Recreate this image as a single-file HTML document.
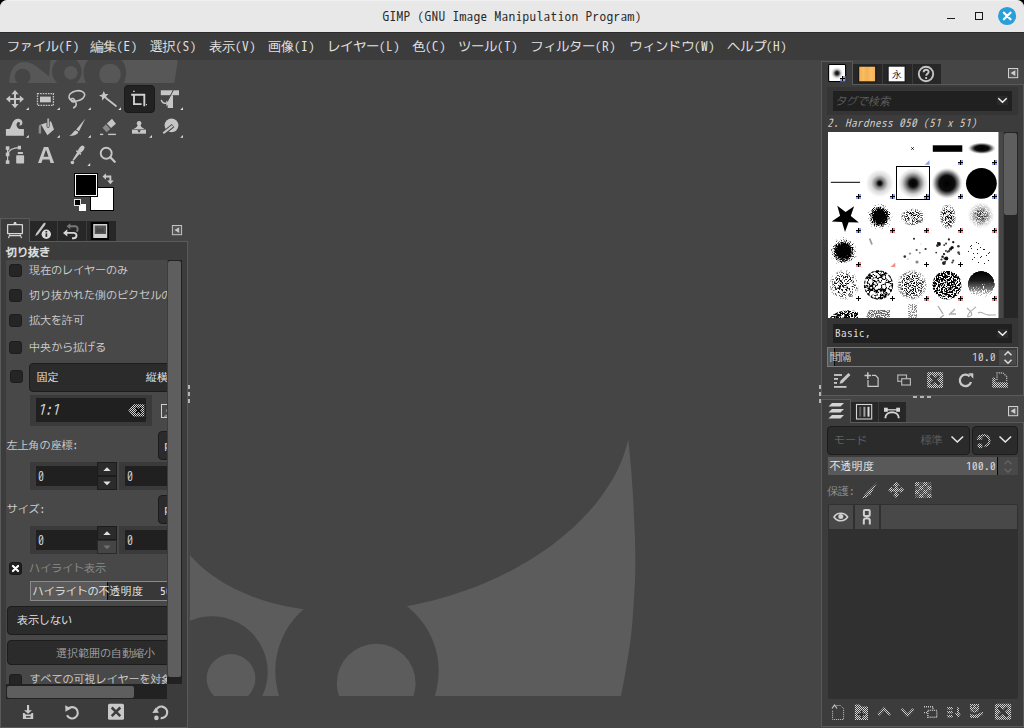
<!DOCTYPE html>
<html lang="ja">
<head>
<meta charset="utf-8">
<title>GIMP (GNU Image Manipulation Program)</title>
<style>
*{box-sizing:border-box;margin:0;padding:0}
html,body{width:1024px;height:728px;overflow:hidden;background:#454545}
body{position:relative;font-family:"WenQuanYi Zen Hei Mono","Noto Sans Mono CJK JP","WenQuanYi Zen Hei","Liberation Mono",monospace;font-size:11.11px;color:#cdcdcd;line-height:1}
#root,#root *{position:absolute}
#root{left:0;top:0;width:1024px;height:728px;overflow:hidden}
.t{white-space:nowrap;line-height:16px;height:16px;letter-spacing:-0.11px}
.t b,.m b,.tt b{font-weight:normal;letter-spacing:0.44px;position:static!important}
.m{font-size:13.33px;letter-spacing:-0.33px;color:#e4e4e4;top:38px;line-height:18px;height:18px;white-space:nowrap}
.m b{letter-spacing:0.33px}
svg{overflow:visible}
#title{left:0;top:0;width:1024px;height:32px;background:#e8e8e8;border-radius:7px 7px 0 0;border-top:1px solid #f0f0f0}
#title .tt{left:0;width:1024px;top:6.500px;text-align:center;font-size:13.33px;letter-spacing:0.33px;line-height:18px;color:#2a2a2a;white-space:nowrap}
#corner{left:0;top:0;width:1024px;height:10px;background:#000}
#menubar{left:0;top:32px;width:1024px;height:28px;background:#3c3c3c;border-top:1px solid #2c2c2c}
.cb{width:13px;height:13px;background:#252525;border:1px solid #1d1d1d;border-radius:3px}
.combo{background:#2b2b2b;border:1px solid #1c1c1c;border-radius:4px}
.dot{background:#b4b4b4}
.ic{fill:#c8c8c8}
</style>
</head>
<body>
<div id="root">
<div id="corner"></div>
<div id="title"><div class="tt">GIMP (GNU Image Manipulation Program)</div>
<div style="left:947px;top:16.700px;width:8.2px;height:1.8px;background:#1c1c1c"></div>
<div style="left:975px;top:11px;width:8px;height:8px;border:1.1px solid #151515"></div>
<svg style="left:998px;top:6px" width="18" height="18" viewBox="0 0 18 18"><circle cx="9.1" cy="9" r="9.1" fill="#2b9fda"/><path d="M5.900 5.800L12.500 12.300M12.500 5.800L5.900 12.300" stroke="#fff" stroke-width="2.300" stroke-linecap="round"/></svg>
</div>
<div id="menubar"></div>
<div class="m" style="left:6.6px">ファイル<b>(F)</b></div>
<div class="m" style="left:90.4px">編集<b>(E)</b></div>
<div class="m" style="left:149.6px">選択<b>(S)</b></div>
<div class="m" style="left:209px">表示<b>(V)</b></div>
<div class="m" style="left:268px">画像<b>(I)</b></div>
<div class="m" style="left:327px">レイヤー<b>(L)</b></div>
<div class="m" style="left:412px">色<b>(C)</b></div>
<div class="m" style="left:458px">ツール<b>(T)</b></div>
<div class="m" style="left:530px">フィルター<b>(R)</b></div>
<div class="m" style="left:629px">ウィンドウ<b>(W)</b></div>
<div class="m" style="left:727px">ヘルプ<b>(H)</b></div>
<!-- toolbox -->
<svg id="wilber-small" style="left:0;top:60px;overflow:hidden" width="190" height="23" viewBox="0 60 190 23">
<path d="M9.3 83 C9.3 70 15 62 24 62 C34 62 40 70 49 76.2 L50.5 60 L177.8 60 L174.4 83 Z" fill="#575757"/>
<circle cx="22.6" cy="76.6" r="7.9" fill="#454545"/>
<circle cx="66.8" cy="71.6" r="14.8" fill="#454545"/>
<circle cx="70.9" cy="72.7" r="6.8" fill="#575757"/>
<circle cx="104.8" cy="73" r="21.3" fill="#454545"/>
<circle cx="110" cy="74.4" r="10.7" fill="#575757"/>
<rect x="0" y="83" width="190" height="3" fill="#454545"/>
<rect x="0" y="57" width="190" height="3" fill="#3c3c3c"/>
</svg>
<div style="left:124px;top:85px;width:31px;height:28px;background:#222;border:1px solid #1a1a1a;border-radius:4px"></div>
<svg id="tools" style="left:0;top:0" width="190" height="245" viewBox="0 0 190 245" fill="#c6c6c6" stroke="none">
<g id="tri" fill="#dedede">
<path d="M28.8 107.2V110H26z"/><path d="M59.8 107.2V110H57z"/><path d="M90.8 107.2V110H88z"/><path d="M121 107.2V110H118.2z"/><path d="M183 107.2V110H180.2z"/>
<path d="M28.8 135V137.8H26z"/><path d="M59.8 135V137.8H57z"/><path d="M90.8 135V137.8H88z"/><path d="M152 135V137.8H149.2z"/><path d="M183 135V137.8H180.2z"/>
<path d="M90.2 163V165.9H87.4z"/>
</g>
<!-- move -->
<path d="M15 90l3.6 4.3h-2.6v3.8h3.8v-2.6l4.2 3.6-4.2 3.6v-2.6h-3.8v3.8h2.6l-3.6 4.3-3.6-4.3h2.6v-3.8h-3.8v2.6l-4.2-3.6 4.2-3.6v2.6h3.8v-3.8h-2.6z"/>
<!-- rect select -->
<rect x="37.5" y="93.6" width="15.9" height="11.8" fill="none" stroke="#c6c6c6" stroke-width="1.3" stroke-dasharray="1.6 1"/>
<rect x="40" y="96.6" width="10.8" height="5.7"/>
<!-- lasso -->
<g fill="none" stroke="#c6c6c6" stroke-width="1.6" stroke-linecap="round">
<ellipse cx="76.8" cy="95.8" rx="8" ry="5" transform="rotate(-12 76.8 95.8)"/>
<path d="M70.5 99.5c2-2 4.5-.5 4 1.500c-.5 1.500-3 1.200-3.200-.5M74.500 100.500c2.500 2.500 2.500 5.500-.8 7.300"/>
</g>
<!-- wand -->
<path d="M103.800 91l1.300 3.100 3.400-.2-2.400 2.400 1.500 3.100-3.100-1.400-2.500 2.400 0-3.400-3-1.600 3.300-.9z"/>
<path d="M106.500 98.500L116 106" stroke="#c6c6c6" stroke-width="1.700" stroke-linecap="round"/>
<!-- crop -->
<g fill="none" stroke="#d0d0d0" stroke-width="1.900">
<path d="M131.200 94.700H144.300V106.200"/><path d="M134 94.700V104.100H141.600"/>
</g>
<rect x="133.100" y="90.700" width="1.600" height="1.300" fill="#d0d0d0"/><rect x="146" y="104" width="1" height="1.200" fill="#d0d0d0"/>
<!-- transform -->
<path d="M160.800 90.300H179V95.200H160.800z"/>
<path d="M173 95.200V107.900H167.700V101L170.500 95.200z"/>
<path d="M173.500 89.800L167.300 101.600" stroke="#454545" stroke-width="1" fill="none"/>
<path d="M161.300 99.800c.4 2.700 2.400 3.600 5.400 3.600" fill="none" stroke="#c6c6c6" stroke-width="1.400"/><path d="M166.300 100.500l3.300 2.900-3.300 2.900z"/>
<!-- warp -->
<path d="M5.900 135.700V129.100H9.500C12 127 12 119 17.500 118.800C21 118.700 23 121 22.300 123.800C21.800 125.500 20 126 19.300 125C21 123.500 19.500 121.300 17.800 122.300C15.500 123.800 16.500 128 19.500 129.100H23.900V135.700z"/>
<!-- bucket -->
<path d="M41 124.600L51 121.300 54 129.600 47.400 135.300z"/>
<path d="M38.700 133.600V127.500C38.700 125.500 39.500 124.800 41 124.600L41.200 133.600z" fill="#8a8a8a"/>
<rect x="47" y="118" width="2.300" height="9.600" rx="1.100" stroke="#454545" stroke-width="0.800"/>
<!-- paintbrush -->
<path d="M85.400 118.500L79 131.200 76.200 129.500z"/>
<path d="M75.600 130.300L78.400 132C77.400 135 73 136.300 69.200 135.700C72.300 134.600 73.300 131.300 75.600 130.300z"/>
<!-- eraser -->
<path d="M112 118.800L115.900 123.700 111 128.100 106.800 123.500z"/>
<path d="M106 124.300L110.200 128.900 106.600 132.300 102.500 127.800z" fill="#8a8a8a"/>
<rect x="100" y="133.700" width="3.200" height="1.400"/><rect x="108.100" y="133.700" width="7.800" height="1.400"/>
<!-- clone -->
<circle cx="139.100" cy="123.300" r="2.300"/>
<path d="M137.800 124.500H140.400C140.400 127 143 127.800 144.500 129H133.700C135.200 127.800 137.800 127 137.800 124.500z"/>
<path d="M132 129.600H146V133.700H132z"/>
<path d="M137.300 130.300H140.900L139.100 132.800z" fill="#3a3a3a"/>
<!-- dodge -->
<circle cx="171.500" cy="125.300" r="6.900"/>
<path d="M165.500 131.600L173 125.600" stroke="#454545" stroke-width="4" fill="none"/><path d="M163.300 133.300L172.600 125.900" stroke="#c6c6c6" stroke-width="2.100" fill="none"/>
<!-- paths -->
<g stroke="#c6c6c6" fill="none" stroke-width="1.200"><path d="M7.600 148V162"/><path d="M7.600 154.300C9 150 14 147.600 19.400 147.600"/></g>
<rect x="5.800" y="146.300" width="3.600" height="3.600"/><rect x="5.800" y="152.600" width="3.600" height="3.600"/><rect x="5.800" y="160.300" width="3.600" height="3.600"/><rect x="17.800" y="145.800" width="3.200" height="3.600"/>
<rect x="17.800" y="152" width="5.100" height="2"/><rect x="16.200" y="155.200" width="7.900" height="8.300" rx="0.800"/>
<!-- text A -->
<path d="M43.900 147H48.200L54.100 162.900H50.600L49.400 159.400H42.600L41.400 162.900H38zM43.500 156.800H48.500L46 149.600z"/>
<!-- picker -->
<ellipse cx="81.300" cy="149.200" rx="2.300" ry="4.100" transform="rotate(37 81.300 149.200)"/>
<path d="M76.400 150.600L80.900 154.300" stroke="#c6c6c6" stroke-width="1.500" fill="none"/>
<path d="M77.500 151.700L79.800 153.500L73.700 160.800L72.500 159.900z"/>
<circle cx="72.400" cy="162.500" r="1.800"/>
<!-- zoom -->
<circle cx="106.200" cy="153.300" r="5.500" fill="none" stroke="#c6c6c6" stroke-width="1.900"/>
<path d="M110.300 157.300L114.700 161.700" stroke="#c6c6c6" stroke-width="2.300" stroke-linecap="round"/>
</svg>
<!-- fg/bg -->
<div style="left:90px;top:187px;width:24px;height:24px;background:#fff;border:1px solid #000"></div>
<div style="left:74px;top:173px;width:24px;height:24px;background:#000;border:1px solid #000;box-shadow:inset 0 0 0 1px #fff"></div>
<div style="left:79px;top:204px;width:7px;height:7px;background:#fff"></div>
<div style="left:74px;top:199px;width:7px;height:7px;background:#000;border:1px solid #e6e6e6"></div>
<svg style="left:102px;top:173px" width="13" height="13" viewBox="102 173 13 13" fill="#c8c8c8"><path d="M102.500 176.500l3.500-3.200v2.300h5.300v5h2.400l-3.300 3.700-3.300-3.700h2.300v-3.100h-3.400v2.300z"/></svg>
<!-- tool options dock -->
<div style="left:0;top:241px;width:188px;height:487px;background:#3c3c3c;border:1px solid #5a5a5a"></div>
<div style="left:30px;top:221px;width:85.500px;height:20px;background:#272727"></div>
<div style="left:57px;top:221px;width:1px;height:20px;background:#3c3c3c"></div>
<div style="left:85.500px;top:221px;width:1px;height:20px;background:#3c3c3c"></div>
<div style="left:0px;top:218px;width:30px;height:24px;background:#3c3c3c;border:1px solid #5a5a5a;border-bottom:none"></div>
<svg style="left:0;top:214px" width="190" height="32" viewBox="0 214 190 32" fill="#d6d6d6">
<!-- easel -->
<rect x="7.600" y="224.700" width="14.800" height="9" rx="0.400" fill="none" stroke="#d6d6d6" stroke-width="1.300"/>
<path d="M13.300 224.100l.800-2h1.800l.800 2z"/>
<path d="M9.500 235.600H20.500M9.800 234.300L8.500 238.200M20.200 234.300L21.500 238.200" stroke="#d6d6d6" stroke-width="1.100" fill="none"/>
<!-- device status -->
<path d="M45.300 222.800C45.800 223.200 45.600 224.200 45 225.300L38 234.500L35.200 236.200L36.200 233.300L43 224C43.800 223 44.800 222.400 45.300 222.800z" fill="#c8c8c8"/>
<circle cx="46.300" cy="234.200" r="4.700" fill="#d8d8d8"/>
<rect x="45.500" y="233.300" width="1.700" height="3.600" fill="#2b2b2b"/><rect x="45.500" y="231" width="1.700" height="1.500" fill="#2b2b2b"/>
<!-- undo history -->
<g fill="none" stroke-width="1.900">
<path d="M70 226.300H75C78 226.300 78.500 230 76.500 231.500" stroke="#787878"/>
<path d="M66 232.900H73.500C77.500 232.900 77.500 238.200 73.500 238.200H72" stroke="#d6d6d6"/>
</g>
<path d="M70.300 223.300V229.300L66.600 226.300z" fill="#787878"/>
<path d="M67.300 229.300V236.500L63 232.900z"/>
<!-- images -->
<rect x="90.800" y="222" width="18.200" height="18" fill="#000"/>
<rect x="93.200" y="224" width="14" height="14" fill="#d0d0d0"/>
<rect x="94.700" y="225.500" width="11.300" height="8.500" fill="#555"/>
<path d="M97 226.500l1.500 3 1.500-1.500 1.500 1.500 1.500-3 1 6h-8z" fill="#444"/>
<!-- menu btn -->
<rect x="172.400" y="225.500" width="9.200" height="9.200" fill="#555" stroke="#c4c4c4" stroke-width="1"/>
<path d="M179.200 227.300V232.900L174.500 230.100z" fill="#c4c4c4"/>
</svg>
<div class="t" style="left:6px;top:244px;font-weight:bold;color:#e0e0e0;-webkit-text-stroke:0.55px #e0e0e0">切り抜き</div>
<!-- scroll area -->
<div style="left:6px;top:260px;width:161px;height:424px;background:#484848;overflow:hidden">
  <div class="cb" style="left:3px;top:4px"></div><div class="t" style="left:23px;top:2px">現在のレイヤーのみ</div>
  <div class="cb" style="left:3px;top:29px"></div><div class="t" style="left:23px;top:27px">切り抜かれた側のピクセルの削除</div>
  <div class="cb" style="left:3px;top:54px"></div><div class="t" style="left:23px;top:52px">拡大を許可</div>
  <div class="cb" style="left:3px;top:81px"></div><div class="t" style="left:23px;top:79px">中央から拡げる</div>
  <div class="cb" style="left:4px;top:110px"></div>
  <div class="combo" style="left:23px;top:102.500px;width:170px;height:29px"></div>
  <div class="t" style="left:30.500px;top:109px;color:#e4e4e4">固定</div><div class="t" style="left:140px;top:109px;color:#e4e4e4">縦横比</div>
  <div style="left:24px;top:134.500px;width:122px;height:31px;background:#3a3a3a"></div>
  <div style="left:30px;top:138px;width:110px;height:24px;background:#202020"></div>
  <div class="t" style="left:31.500px;top:142px;font-style:italic;font-size:14.67px;letter-spacing:-0.3px;color:#d8d8d8">1:1</div>
  <svg style="left:122px;top:143.500px" width="17" height="13" viewBox="0 0 17 13"><path d="M5.300 0.300H16.300V12.500H5.300L0.300 6.400z" fill="url(#st2)"/><path d="M7.800 3.500L13.300 9.300M13.300 3.500L7.800 9.300" stroke="#101010" stroke-width="2"/></svg>
  <div style="left:155px;top:143.500px;width:14px;height:14px;border:1.300px solid #d0d0d0"></div>
  <svg style="left:157px;top:148px" width="10" height="9" viewBox="0 0 10 9"><circle cx="5" cy="2.500" r="2" fill="#8a8a8a"/><path d="M1 9C1 5.500 9 5.500 9 9z" fill="#8a8a8a"/></svg>
  <div class="t" style="left:0.500px;top:177px">左上角の座標:</div>
  <div class="combo" style="left:152px;top:170.500px;width:40px;height:29.500px"></div>
  <div class="t" style="left:158.500px;top:177px;color:#e4e4e4"><b>px</b></div>
  <!-- spin row 1 -->
  <div style="left:24px;top:202px;width:87px;height:28px;background:#3a3a3a"></div>
  <div style="left:30px;top:206px;width:61px;height:20px;background:#202020"></div>
  <div class="t" style="left:32px;top:209px;font-size:12px"><b>0</b></div>
  <div style="left:91px;top:202px;width:20px;height:14px;background:#2b2b2b;border:1px solid #1c1c1c"></div>
  <div style="left:91px;top:216px;width:20px;height:14px;background:#2b2b2b;border:1px solid #1c1c1c"></div>
  <svg style="left:91px;top:202px" width="20" height="28" viewBox="0 0 20 28" fill="#e0e0e0"><path d="M6.300 9L10 5.300 13.700 9z"/><path d="M6.300 19.500L10 23.200 13.700 19.500z"/></svg>
  <div style="left:113px;top:202px;width:87px;height:28px;background:#3a3a3a"></div>
  <div style="left:119px;top:206px;width:61px;height:20px;background:#202020"></div>
  <div class="t" style="left:121px;top:209px;font-size:12px"><b>0</b></div>
  <div class="t" style="left:0.500px;top:241px">サイズ:</div>
  <div class="combo" style="left:152px;top:234.500px;width:40px;height:29.500px"></div>
  <div class="t" style="left:158.500px;top:241px;color:#e4e4e4"><b>px</b></div>
  <!-- spin row 2 -->
  <div style="left:24px;top:266px;width:87px;height:28px;background:#3a3a3a"></div>
  <div style="left:30px;top:270px;width:61px;height:20px;background:#202020"></div>
  <div class="t" style="left:32px;top:273px;font-size:12px"><b>0</b></div>
  <div style="left:91px;top:266px;width:20px;height:14px;background:#2b2b2b;border:1px solid #1c1c1c"></div>
  <div style="left:91px;top:280px;width:20px;height:14px;background:#454545;border:1px solid #2a2a2a"></div>
  <svg style="left:91px;top:266px" width="20" height="28" viewBox="0 0 20 28"><path d="M6.300 9L10 5.300 13.700 9z" fill="#e0e0e0"/><path d="M6.300 19.500L10 23.200 13.700 19.500z" fill="#707070"/></svg>
  <div style="left:113px;top:266px;width:87px;height:28px;background:#3a3a3a"></div>
  <div style="left:119px;top:270px;width:61px;height:20px;background:#202020"></div>
  <div class="t" style="left:121px;top:273px;font-size:12px"><b>0</b></div>
  <!-- highlight -->
  <div class="cb" style="left:3px;top:302px;background:#1e1e1e;border-color:#181818"></div>
  <svg style="left:3px;top:302px" width="13" height="13" viewBox="0 0 13 13"><path d="M3.900 3.900L9.100 9.100M9.100 3.900L3.900 9.100" stroke="#fff" stroke-width="2.100" stroke-linecap="round"/></svg>
  <div class="t" style="left:23px;top:300px;color:#8c8c8c">ハイライト表示</div>
  <div style="left:24px;top:321px;width:180px;height:20px;background:#383838;border:1px solid #8a8a8a"></div>
  <div style="left:25px;top:322px;width:77px;height:18px;background:#5a5a5a;border-right:1px solid #0a0a0a"></div>
  <div class="t" style="left:26.500px;top:323px;color:#e6e6e6">ハイライトの不透明度</div>
  <div class="t" style="left:154px;top:323px;color:#e6e6e6"><b>50.0</b></div>
  <div class="combo" style="left:0.500px;top:345.500px;width:200px;height:29.500px"></div>
  <div class="t" style="left:11px;top:352px;color:#e4e4e4">表示しない</div>
  <div class="combo" style="left:0.500px;top:379.500px;width:200px;height:25px"></div>
  <div class="t" style="left:50px;top:384.500px;color:#a0a0a0">選択範囲の自動縮小</div>
  <div class="cb" style="left:3px;top:413.500px"></div><div class="t" style="left:23.500px;top:411px">すべての可視レイヤーを対象にする</div>
</div>
<!-- v scrollbar -->
<div style="left:167px;top:260px;width:15px;height:424px;background:#222"></div><div style="left:167px;top:260px;width:1px;height:417px;background:#3c3c3c"></div>
<div style="left:168px;top:261px;width:13px;height:416px;background:#5e5e5e;border-radius:2px"></div>
<!-- h scrollbar -->
<div style="left:6px;top:684px;width:161px;height:14.500px;background:#222"></div>
<div style="left:7px;top:685.500px;width:127px;height:12.500px;background:#5e5e5e;border-radius:2px"></div>
<!-- bottom buttons -->
<svg style="left:0;top:696px" width="190" height="32" viewBox="0 696 190 32" fill="#c8c8c8">
<path d="M27 704.900h2.100v5.300h2.900l-4 3.600-4-3.600h3z"/>
<path d="M22.900 713h1.600l1.200 1.600h4.800l1.200-1.600h1.500v6.100h-10.300z"/><rect x="26" y="716.100" width="4.500" height="1.500" fill="#3c3c3c"/>
<path d="M67.600 709.300A5.700 5.700 0 1 1 67 715.300" fill="none" stroke="#c8c8c8" stroke-width="2.100"/>
<path d="M65.200 705.300L65.500 711.700 71 708.600z"/>
<rect x="108" y="703.800" width="16" height="16" rx="1.500"/>
<path d="M111.700 707.500L120.300 716.100M120.300 707.500L111.700 716.100" stroke="#3c3c3c" stroke-width="2.500"/>
<path d="M155.700 711.300A5.800 5.800 0 1 1 160.700 718.100" fill="none" stroke="#c8c8c8" stroke-width="2.100"/>
<path d="M152.300 713L158.900 712.700 155.800 707.600z"/>
<circle cx="156.400" cy="717.900" r="2.300"/>
</svg>
<!-- handles -->
<div class="dot" style="left:188px;top:385px;width:2px;height:4px"></div>
<div class="dot" style="left:188px;top:392px;width:2px;height:4px"></div>
<div class="dot" style="left:188px;top:399px;width:2px;height:4px"></div>
<!-- canvas wilber -->
<svg style="left:188px;top:400px" width="460" height="296" viewBox="188 400 460 296">
<defs><clipPath id="cv"><rect x="189.600" y="400" width="460" height="296"/></clipPath></defs>
<g clip-path="url(#cv)">
<path d="M189.6 696L189.7 554.9 194.0 559.6 198.5 564.1 203.2 568.3 208.2 572.3 213.3 576.1 218.5 579.6 223.9 582.9 229.4 586.0 234.9 588.9 240.6 591.6 246.3 594.1 252.1 596.4 257.9 598.5 263.8 600.5 269.6 602.2 275.5 603.8 281.4 605.2 287.3 606.5 293.1 607.6 299.0 608.6 304.8 609.5 310.7 610.2 316.5 610.8 322.2 611.3 328.0 611.6 333.7 611.9 339.4 612.0 345.0 612.0 350.6 612.0 356.2 611.8 361.8 611.6 367.3 611.2 372.8 610.8 378.2 610.3 383.7 609.7 389.1 609.0 394.4 608.3 399.8 607.4 405.1 606.5 410.4 605.5 415.7 604.5 420.9 603.3 426.1 602.1 431.3 600.9 436.5 599.5 441.7 598.1 446.9 596.6 452.0 595.0 457.1 593.3 462.2 591.6 467.3 589.8 472.4 587.9 477.5 585.9 482.6 583.9 487.6 581.7 492.7 579.5 497.7 577.2 502.7 574.8 507.8 572.3 512.8 569.7 517.7 567.0 522.7 564.1 527.7 561.2 532.6 558.2 537.5 555.1 542.4 551.8 547.3 548.4 552.1 544.9 556.8 541.3 561.6 537.5 566.2 533.6 570.9 529.6 575.4 525.4 579.9 521.1 584.2 516.6 588.5 512.0 592.7 507.3 596.7 502.4 600.6 497.3 604.4 492.1 607.9 486.8 611.3 481.3 614.5 475.7 617.5 469.9 620.2 464.0 622.7 458.0 624.9 451.8 626.8 445.6 628.4 439.3C628.8 444.4 630.5 461.7 631.2 470.0C631.9 478.3 632.2 482.8 632.6 489.2C633.0 495.6 633.3 502.1 633.6 508.5C633.9 514.9 634.2 521.1 634.5 527.7C634.8 534.3 635.1 539.3 635.2 548.0C635.3 556.7 635.6 566.2 635.0 580.0C634.4 593.8 633.1 616.0 631.6 630.8C630.1 645.6 627.8 658.0 626.0 668.9C624.2 679.8 621.8 691.5 620.9 696.0Z" fill="#5c5c5c"/>
<circle cx="212" cy="672" r="55.700" fill="#454545"/>
<circle cx="357" cy="671" r="81.700" fill="#454545"/>
<circle cx="231" cy="678.500" r="24.400" fill="#5c5c5c"/>
<circle cx="376.200" cy="683.200" r="39.400" fill="#5c5c5c"/>
</g>
</svg>
<!-- brushes dock -->
<div style="left:821px;top:84px;width:203px;height:312px;background:#3c3c3c;border:1px solid #5a5a5a"></div>
<div style="left:852.500px;top:64px;width:88px;height:20px;background:#272727"></div>
<div style="left:882px;top:64px;width:1px;height:20px;background:#3c3c3c"></div>
<div style="left:911.500px;top:64px;width:1px;height:20px;background:#3c3c3c"></div>
<div style="left:821px;top:61px;width:32px;height:24px;background:#3c3c3c;border:1px solid #5a5a5a;border-bottom:none"></div>
<svg style="left:821px;top:60px" width="203" height="26" viewBox="821 60 203 26">
<defs><radialGradient id="rg0"><stop offset="0" stop-color="#000"/><stop offset="0.3" stop-color="#000" stop-opacity="0.8"/><stop offset="0.65" stop-color="#000" stop-opacity="0.2"/><stop offset="1" stop-color="#000" stop-opacity="0"/></radialGradient>
<linearGradient id="wood" x1="0" x2="1" y1="0" y2="0"><stop offset="0" stop-color="#f3ad4c"/><stop offset="0.25" stop-color="#f8bd64"/><stop offset="0.5" stop-color="#f4b050"/><stop offset="0.75" stop-color="#f8c068"/><stop offset="1" stop-color="#f4b254"/></linearGradient></defs>
<rect x="828.600" y="64.500" width="17" height="17" rx="1" fill="#fff" stroke="#000" stroke-width="1.100"/>
<circle cx="837" cy="73.200" r="6" fill="url(#rg0)"/>
<path d="M843 76h2.500v5.500h-2.500zM840 79h3v2.500h-3z" fill="#8c9ef6"/><path d="M840 78.500h5M842.500 76v5" stroke="#000" stroke-width="1"/>
<rect x="858" y="65.500" width="18.300" height="17" fill="#1a1a1a"/><rect x="859.200" y="66.700" width="15.900" height="14.600" fill="url(#wood)"/>
<rect x="887.500" y="65.500" width="18.300" height="17" fill="#1a1a1a"/><rect x="888.700" y="66.700" width="15.900" height="14.600" fill="#fff"/>
<text x="896.700" y="77.800" font-size="10" text-anchor="middle" fill="#111" style="position:static">永</text>
<circle cx="926" cy="74" r="7.200" fill="none" stroke="#c4c4c4" stroke-width="1.900"/>
<path d="M923.600 72.300c0-3.300 5-3.300 5-0.300c0 1.800-2.400 1.900-2.400 3.800" fill="none" stroke="#c8c8c8" stroke-width="1.900"/><rect x="925.200" y="77.100" width="1.900" height="1.900" fill="#c8c8c8"/>
<rect x="1008.500" y="68.500" width="9.200" height="9.200" fill="#555" stroke="#d0d0d0" stroke-width="1"/><path d="M1015.300 70.300V75.900L1010.600 73.100z" fill="#d0d0d0"/>
</svg>
<div style="left:827px;top:87px;width:191px;height:28px;background:#353535"></div>
<div style="left:833px;top:91px;width:179px;height:19.500px;background:#202020"></div>
<div class="t" style="left:835px;top:93px;font-style:italic;color:#5c5c5c">タグで検索</div>
<svg style="left:997px;top:96px" width="11" height="9" viewBox="0 0 11 9"><rect x="0" y="0" width="11" height="9" fill="#2a2a2a"/><path d="M1.300 2.300L5.500 6.300 9.700 2.300" fill="none" stroke="#f0f0f0" stroke-width="1.500"/></svg>
<div class="t" style="left:827px;top:115px;font-style:italic;color:#d4d4d4"><b>2. Hardness 050 (51 x 51)</b></div>
<div style="left:1003.500px;top:132px;width:14.500px;height:186px;background:#262626"></div>
<div style="left:1004px;top:132.500px;width:13.200px;height:82.500px;background:#5e5e5e;border-radius:2.500px"></div>
<div style="left:998.500px;top:132px;width:4.500px;height:186px;background:#474747"></div>
<svg style="left:828px;top:132px" width="170.500" height="186" viewBox="828 132 170.500 186">
<defs><clipPath id="gc"><rect x="828" y="132" width="170.500" height="186"/></clipPath>
<radialGradient id="h25"><stop offset="0" stop-color="#000" stop-opacity="1"/><stop offset="0.12" stop-color="#000" stop-opacity="0.95"/><stop offset="0.3" stop-color="#000" stop-opacity="0.5"/><stop offset="0.6" stop-color="#000" stop-opacity="0.15"/><stop offset="1" stop-color="#000" stop-opacity="0"/></radialGradient>
<radialGradient id="h50"><stop offset="0" stop-color="#000" stop-opacity="1"/><stop offset="0.25" stop-color="#000" stop-opacity="0.95"/><stop offset="0.5" stop-color="#000" stop-opacity="0.5"/><stop offset="0.75" stop-color="#000" stop-opacity="0.15"/><stop offset="1" stop-color="#000" stop-opacity="0"/></radialGradient>
<radialGradient id="h75"><stop offset="0" stop-color="#000" stop-opacity="1"/><stop offset="0.5" stop-color="#000" stop-opacity="0.95"/><stop offset="0.7" stop-color="#000" stop-opacity="0.55"/><stop offset="0.88" stop-color="#000" stop-opacity="0.15"/><stop offset="1" stop-color="#000" stop-opacity="0"/></radialGradient>
<radialGradient id="soft"><stop offset="0" stop-color="#000" stop-opacity="1"/><stop offset="1" stop-color="#000" stop-opacity="0"/></radialGradient>
<radialGradient id="blob"><stop offset="0" stop-color="#000" stop-opacity="1"/><stop offset="1" stop-color="#000" stop-opacity="0"/></radialGradient>
<radialGradient id="blob2"><stop offset="0" stop-color="#000" stop-opacity="1"/><stop offset="0.55" stop-color="#000" stop-opacity="0.95"/><stop offset="0.85" stop-color="#000" stop-opacity="0.5"/><stop offset="1" stop-color="#000" stop-opacity="0"/></radialGradient>
<radialGradient id="blob3"><stop offset="0" stop-color="#000" stop-opacity="1"/><stop offset="0.3" stop-color="#000" stop-opacity="0.8"/><stop offset="0.7" stop-color="#000" stop-opacity="0.25"/><stop offset="1" stop-color="#000" stop-opacity="0"/></radialGradient>
<filter id="c1" x="-0.1" y="-0.1" width="1.2" height="1.2" color-interpolation-filters="sRGB"><feTurbulence type="fractalNoise" baseFrequency="0.22" numOctaves="2" seed="4" result="n"/><feColorMatrix in="n" type="matrix" values="0 0 0 0 0 0 0 0 0 0 0 0 0 0 0 1 0 0 0 0"/><feComponentTransfer><feFuncA type="table" tableValues="0 0 0 0 0 0 0 0 0.3 1 1 0.3 0 0 0 0 0 0 0 0 0"/></feComponentTransfer><feComposite in2="SourceGraphic" operator="in"/><feGaussianBlur stdDeviation="0.3"/></filter>
<filter id="c2" x="-0.1" y="-0.1" width="1.2" height="1.2" color-interpolation-filters="sRGB"><feTurbulence type="fractalNoise" baseFrequency="0.3" numOctaves="3" seed="12" result="n"/><feColorMatrix in="n" type="matrix" values="0 0 0 0 0 0 0 0 0 0 0 0 0 0 0 1 0 0 0 0"/><feComponentTransfer><feFuncA type="table" tableValues="0 0 0 0 0 0 0 0 0 1 1 0 0 0 0 0 0 0 0 0 0"/></feComponentTransfer><feComposite in2="SourceGraphic" operator="in"/><feGaussianBlur stdDeviation="0.3"/></filter>
<filter id="n1" x="-0.1" y="-0.1" width="1.2" height="1.2" color-interpolation-filters="sRGB"><feTurbulence type="fractalNoise" baseFrequency="0.9" numOctaves="3" seed="3" result="n"/><feColorMatrix in="n" type="matrix" values="0 0 0 0 0 0 0 0 0 0 0 0 0 0 0 1 0 0 0 0" result="t"/><feComposite in="t" in2="SourceGraphic" operator="arithmetic" k1="0" k2="4.00" k3="6.00" k4="-4.50"/><feGaussianBlur stdDeviation="0.4"/></filter>
<filter id="n2" x="-0.1" y="-0.1" width="1.2" height="1.2" color-interpolation-filters="sRGB"><feTurbulence type="fractalNoise" baseFrequency="0.9" numOctaves="3" seed="11" result="n"/><feColorMatrix in="n" type="matrix" values="0 0 0 0 0 0 0 0 0 0 0 0 0 0 0 7 0 0 0 -3.29" result="t"/><feComposite in="t" in2="SourceGraphic" operator="in"/><feGaussianBlur stdDeviation="0.4"/></filter>
<filter id="n3" x="-0.1" y="-0.1" width="1.2" height="1.2" color-interpolation-filters="sRGB"><feTurbulence type="fractalNoise" baseFrequency="0.9" numOctaves="3" seed="5" result="n"/><feColorMatrix in="n" type="matrix" values="0 0 0 0 0 0 0 0 0 0 0 0 0 0 0 7 0 0 0 -3.29" result="t"/><feComposite in="t" in2="SourceGraphic" operator="in"/><feGaussianBlur stdDeviation="0.4"/></filter>
<filter id="n4" x="-0.1" y="-0.1" width="1.2" height="1.2" color-interpolation-filters="sRGB"><feTurbulence type="fractalNoise" baseFrequency="1.2" numOctaves="2" seed="8" result="n"/><feColorMatrix in="n" type="matrix" values="0 0 0 0 0 0 0 0 0 0 0 0 0 0 0 3 0 0 0 -0.90" result="t"/><feComposite in="t" in2="SourceGraphic" operator="in"/><feGaussianBlur stdDeviation="0.4"/></filter>
<filter id="n5" x="-0.1" y="-0.1" width="1.2" height="1.2" color-interpolation-filters="sRGB"><feTurbulence type="fractalNoise" baseFrequency="0.8" numOctaves="3" seed="21" result="n"/><feColorMatrix in="n" type="matrix" values="0 0 0 0 0 0 0 0 0 0 0 0 0 0 0 1 0 0 0 0" result="t"/><feComposite in="t" in2="SourceGraphic" operator="arithmetic" k1="0" k2="3.50" k3="5.60" k4="-4.15"/><feGaussianBlur stdDeviation="0.4"/></filter>
<filter id="n6" x="-0.1" y="-0.1" width="1.2" height="1.2" color-interpolation-filters="sRGB"><feTurbulence type="fractalNoise" baseFrequency="0.3" numOctaves="3" seed="9" result="n"/><feColorMatrix in="n" type="matrix" values="0 0 0 0 0 0 0 0 0 0 0 0 0 0 0 10 0 0 0 -4.90" result="t"/><feComposite in="t" in2="SourceGraphic" operator="in"/><feGaussianBlur stdDeviation="0.35"/></filter>
<filter id="n7" x="-0.1" y="-0.1" width="1.2" height="1.2" color-interpolation-filters="sRGB"><feTurbulence type="fractalNoise" baseFrequency="0.9" numOctaves="3" seed="14" result="n"/><feColorMatrix in="n" type="matrix" values="0 0 0 0 0 0 0 0 0 0 0 0 0 0 0 7 0 0 0 -3.22" result="t"/><feComposite in="t" in2="SourceGraphic" operator="in"/><feGaussianBlur stdDeviation="0.35"/></filter>
<filter id="n8" x="-0.1" y="-0.1" width="1.2" height="1.2" color-interpolation-filters="sRGB"><feTurbulence type="fractalNoise" baseFrequency="0.3" numOctaves="2" seed="17" result="n"/><feColorMatrix in="n" type="matrix" values="0 0 0 0 0 0 0 0 0 0 0 0 0 0 0 1 0 0 0 0" result="t"/><feComposite in="t" in2="SourceGraphic" operator="arithmetic" k1="0" k2="14.00" k3="0.00" k4="-6.70"/><feComposite in2="SourceGraphic" operator="in"/><feGaussianBlur stdDeviation="0.3"/></filter>
<filter id="n9" x="-0.1" y="-0.1" width="1.2" height="1.2" color-interpolation-filters="sRGB"><feTurbulence type="fractalNoise" baseFrequency="0.6" numOctaves="3" seed="2" result="n"/><feColorMatrix in="n" type="matrix" values="0 0 0 0 0 0 0 0 0 0 0 0 0 0 0 1 0 0 0 0" result="t"/><feComposite in="t" in2="SourceGraphic" operator="arithmetic" k1="0" k2="10.00" k3="0.00" k4="-4.20"/><feComposite in2="SourceGraphic" operator="in"/><feGaussianBlur stdDeviation="0.3"/></filter>
<filter id="n10" x="-0.1" y="-0.1" width="1.2" height="1.2" color-interpolation-filters="sRGB"><feTurbulence type="fractalNoise" baseFrequency="0.9" numOctaves="3" seed="31" result="n"/><feColorMatrix in="n" type="matrix" values="0 0 0 0 0 0 0 0 0 0 0 0 0 0 0 1 0 0 0 0" result="t"/><feComposite in="t" in2="SourceGraphic" operator="arithmetic" k1="0" k2="7.00" k3="0.00" k4="-2.80"/><feComposite in2="SourceGraphic" operator="in"/><feGaussianBlur stdDeviation="0.3"/></filter>
<filter id="n11" x="-0.1" y="-0.1" width="1.2" height="1.2" color-interpolation-filters="sRGB"><feTurbulence type="fractalNoise" baseFrequency="0.9" numOctaves="3" seed="33" result="n"/><feColorMatrix in="n" type="matrix" values="0 0 0 0 0 0 0 0 0 0 0 0 0 0 0 1 0 0 0 0" result="t"/><feComposite in="t" in2="SourceGraphic" operator="arithmetic" k1="0" k2="6.00" k3="6.00" k4="-5.25"/><feComposite in2="SourceGraphic" operator="in"/><feGaussianBlur stdDeviation="0.3"/></filter>
<filter id="bl"><feGaussianBlur stdDeviation="0.500"/></filter>
<linearGradient id="fade" x1="0" x2="0" y1="0" y2="1"><stop offset="0" stop-color="#000"/><stop offset="0.35" stop-color="#000" stop-opacity="0.9"/><stop offset="1" stop-color="#000" stop-opacity="0.2"/></linearGradient>
</defs>
<rect x="828" y="132" width="170.500" height="186" fill="#fff"/>
<g clip-path="url(#gc)">
<path d="M911.3 147.3l2.400 2.400M913.7 147.3l-2.400 2.400" stroke="#000" stroke-width="0.900"/>
<path d="M929.500 160.200V164.700H924.700z" fill="#8c9ef6"/>
<rect x="932.800" y="145.300" width="29.500" height="6.500" fill="#000" filter="url(#bl)"/>
<path d="M961.0 160.0h2v5h-2zM958.0 163.0h3v2h-3z" fill="#8c9ef6"/><path d="M958.0 162.5h5M960.5 160.0v5" stroke="#000" stroke-width="1"/>
<ellipse cx="981.800" cy="148.300" rx="14" ry="5.800" fill="url(#h75)"/>
<path d="M995.0 160.0h2v5h-2zM992.0 163.0h3v2h-3z" fill="#8c9ef6"/><path d="M992.0 162.5h5M994.5 160.0v5" stroke="#000" stroke-width="1"/>
<rect x="830.800" y="181.800" width="29.300" height="1" fill="#000"/>
<path d="M859.0 194.0h2v5h-2zM856.0 197.0h3v2h-3z" fill="#8c9ef6"/><path d="M856.0 196.5h5M858.5 194.0v5" stroke="#000" stroke-width="1"/>
<circle cx="879.700" cy="183.300" r="14" fill="url(#h25)"/>
<path d="M893.0 194.0h2v5h-2zM890.0 197.0h3v2h-3z" fill="#8c9ef6"/><path d="M890.0 196.5h5M892.5 194.0v5" stroke="#000" stroke-width="1"/>
<circle cx="913.100" cy="183.300" r="15" fill="url(#h50)"/>
<rect x="896.500" y="166.500" width="33" height="33" fill="none" stroke="#000" stroke-width="1"/>
<path d="M927.0 194.0h2v5h-2zM924.0 197.0h3v2h-3z" fill="#8c9ef6"/><path d="M924.0 196.5h5M926.5 194.0v5" stroke="#000" stroke-width="1"/>
<circle cx="947" cy="183.300" r="15.500" fill="url(#h75)"/>
<path d="M961.0 194.0h2v5h-2zM958.0 197.0h3v2h-3z" fill="#8c9ef6"/><path d="M958.0 196.5h5M960.5 194.0v5" stroke="#000" stroke-width="1"/>
<circle cx="981.400" cy="183.300" r="15.400" fill="#000"/>
<path d="M995.0 194.0h2v5h-2zM992.0 197.0h3v2h-3z" fill="#8c9ef6"/><path d="M992.0 196.5h5M994.5 194.0v5" stroke="#000" stroke-width="1"/>
<path d="M845.0 231.9L842.0 222.0L831.7 221.6L840.1 215.7L837.3 205.8L845.6 212.0L854.1 206.3L850.8 216.0L858.9 222.4L848.6 222.2z" fill="#000"/>
<path d="M859.0 228.0h2v5h-2zM856.0 231.0h3v2h-3z" fill="#8c9ef6"/><path d="M856.0 230.5h5M858.5 228.0v5" stroke="#000" stroke-width="1"/>
<ellipse cx="879.900" cy="216.700" rx="18" ry="18" fill="url(#blob)" filter="url(#n1)"/>
<path d="M893.0 228.0h2v5h-2zM890.0 231.0h3v2h-3z" fill="#f68c8c"/><path d="M890.0 230.5h5M892.5 228.0v5" stroke="#000" stroke-width="1"/>
<ellipse cx="912.800" cy="217.100" rx="12.500" ry="9" fill="url(#blob2)" filter="url(#n2)"/>
<path d="M927.0 228.0h2v5h-2zM924.0 231.0h3v2h-3z" fill="#f68c8c"/><path d="M924.0 230.5h5M926.5 228.0v5" stroke="#000" stroke-width="1"/>
<ellipse cx="947.900" cy="216.700" rx="8.500" ry="13" fill="url(#blob2)" filter="url(#n3)"/>
<path d="M961.0 228.0h2v5h-2zM958.0 231.0h3v2h-3z" fill="#f68c8c"/><path d="M958.0 230.5h5M960.5 228.0v5" stroke="#000" stroke-width="1"/>
<circle cx="981" cy="215.500" r="13" fill="url(#blob3)" filter="url(#n4)"/>
<path d="M995.0 228.0h2v5h-2zM992.0 231.0h3v2h-3z" fill="#f68c8c"/><path d="M992.0 230.5h5M994.5 228.0v5" stroke="#000" stroke-width="1"/>
<circle cx="843.300" cy="251.400" r="20" fill="url(#blob)" filter="url(#n5)"/>
<path d="M859.0 262.0h2v5h-2zM856.0 265.0h3v2h-3z" fill="#f68c8c"/><path d="M856.0 264.5h5M858.5 262.0v5" stroke="#000" stroke-width="1"/>
<path d="M869.600 238.500L872 244.500" stroke="#9a9a9a" stroke-width="1.800" filter="url(#bl)"/>
<path d="M895.300 262.400V267H890.500z" fill="#f68c8c"/>
<circle cx="914" cy="238.7" r="1" fill="#222" filter="url(#bl)"/>
<circle cx="925.6" cy="249" r="1.1" fill="#222" filter="url(#bl)"/>
<circle cx="916.6" cy="250" r="1.1" fill="#555" filter="url(#bl)"/>
<circle cx="919.8" cy="252.8" r="1" fill="#888" filter="url(#bl)"/>
<circle cx="910" cy="253.6" r="1.2" fill="#999" filter="url(#bl)"/>
<circle cx="904.8" cy="256.6" r="1.3" fill="#333" filter="url(#bl)"/>
<circle cx="917" cy="262" r="1.6" fill="#888" filter="url(#bl)"/>
<circle cx="908" cy="259" r="0.7" fill="#aaa" filter="url(#bl)"/>
<circle cx="921" cy="244" r="0.6" fill="#bbb" filter="url(#bl)"/>
<path d="M924.0 264.5h5M926.5 262.0v5" stroke="#000" stroke-width="1"/>
<circle cx="939.0" cy="244.0" r="1.9" fill="#111" filter="url(#bl)"/>
<circle cx="953.2" cy="242.2" r="1.1" fill="#111" filter="url(#bl)"/>
<circle cx="950.6" cy="249.0" r="1.6" fill="#222" filter="url(#bl)"/>
<circle cx="944.0" cy="254.1" r="1.1" fill="#111" filter="url(#bl)"/>
<circle cx="946.0" cy="243.6" r="1.1" fill="#444" filter="url(#bl)"/>
<circle cx="953.2" cy="260.7" r="1.1" fill="#444" filter="url(#bl)"/>
<circle cx="947.4" cy="251.8" r="0.9" fill="#222" filter="url(#bl)"/>
<circle cx="948.9" cy="239.4" r="1.1" fill="#222" filter="url(#bl)"/>
<circle cx="943.9" cy="263.1" r="1.9" fill="#222" filter="url(#bl)"/>
<circle cx="952.3" cy="262.5" r="1.1" fill="#444" filter="url(#bl)"/>
<circle cx="944.6" cy="258.5" r="1.1" fill="#222" filter="url(#bl)"/>
<circle cx="946.4" cy="258.5" r="1.9" fill="#111" filter="url(#bl)"/>
<circle cx="938.0" cy="245.5" r="0.9" fill="#333" filter="url(#bl)"/>
<circle cx="942.6" cy="256.8" r="1.3" fill="#222" filter="url(#bl)"/>
<circle cx="936.2" cy="252.6" r="0.9" fill="#333" filter="url(#bl)"/>
<circle cx="948.9" cy="251.1" r="1.3" fill="#444" filter="url(#bl)"/>
<circle cx="958.5" cy="252.6" r="1.3" fill="#444" filter="url(#bl)"/>
<circle cx="945.9" cy="250.8" r="0.9" fill="#222" filter="url(#bl)"/>
<circle cx="937.9" cy="242.9" r="0.9" fill="#222" filter="url(#bl)"/>
<circle cx="958.4" cy="246.3" r="1.3" fill="#333" filter="url(#bl)"/>
<circle cx="952.1" cy="247.5" r="1.6" fill="#111" filter="url(#bl)"/>
<circle cx="937.3" cy="245.6" r="1.3" fill="#333" filter="url(#bl)"/>
<circle cx="959.3" cy="254.1" r="0.9" fill="#222" filter="url(#bl)"/>
<circle cx="941.5" cy="259.5" r="1.1" fill="#333" filter="url(#bl)"/>
<circle cx="945.2" cy="261.6" r="0.9" fill="#333" filter="url(#bl)"/>
<circle cx="944.2" cy="245.1" r="0.9" fill="#222" filter="url(#bl)"/>
<path d="M958.0 264.5h5M960.5 262.0v5" stroke="#000" stroke-width="1"/>
<rect x="973" y="253" width="1" height="1" fill="#222"/>
<rect x="988" y="260" width="1" height="1" fill="#222"/>
<rect x="989" y="252" width="1" height="1" fill="#222"/>
<rect x="983" y="249" width="1" height="1" fill="#222"/>
<rect x="971" y="248" width="1" height="1" fill="#222"/>
<rect x="988" y="253" width="1" height="1" fill="#222"/>
<rect x="978" y="243" width="1" height="1" fill="#222"/>
<rect x="980" y="247" width="1" height="1" fill="#222"/>
<rect x="981" y="256" width="1" height="1" fill="#222"/>
<rect x="968" y="251" width="1" height="1" fill="#222"/>
<rect x="971" y="245" width="1" height="1" fill="#222"/>
<rect x="972" y="259" width="1" height="1" fill="#222"/>
<rect x="986" y="255" width="1" height="1" fill="#222"/>
<rect x="976" y="242" width="1" height="1" fill="#222"/>
<rect x="977" y="253" width="1" height="1" fill="#222"/>
<rect x="980" y="257" width="1" height="1" fill="#222"/>
<rect x="978" y="262" width="1" height="1" fill="#222"/>
<rect x="984" y="263" width="1" height="1" fill="#222"/>
<rect x="983" y="249" width="1" height="1" fill="#222"/>
<rect x="974" y="257" width="1" height="1" fill="#222"/>
<rect x="988" y="253" width="1" height="1" fill="#222"/>
<rect x="984" y="249" width="1" height="1" fill="#222"/>
<rect x="977" y="249" width="1" height="1" fill="#222"/>
<rect x="970" y="246" width="1" height="1" fill="#222"/>
<circle cx="844.200" cy="284.900" r="15.500" fill="url(#blob2)" filter="url(#c2)"/>
<path d="M856.0 298.5h5M858.5 296.0v5" stroke="#000" stroke-width="1"/>
<circle cx="878.500" cy="284.900" r="14.500" fill="#000" filter="url(#c1)"/><circle cx="878.500" cy="284.900" r="14" fill="none" stroke="#000" stroke-width="1.200" stroke-dasharray="3 1.500" opacity="0.85"/>
<path d="M890.0 298.5h5M892.5 296.0v5" stroke="#000" stroke-width="1"/>
<circle cx="911.900" cy="284.900" r="15.500" fill="url(#blob2)" filter="url(#n7)"/>
<path d="M927.0 296.0h2v5h-2zM924.0 299.0h3v2h-3z" fill="#f68c8c"/><path d="M924.0 298.5h5M926.5 296.0v5" stroke="#000" stroke-width="1"/>
<circle cx="947" cy="284.900" r="14.500" fill="#000" filter="url(#n9)"/>
<path d="M961.0 296.0h2v5h-2zM958.0 299.0h3v2h-3z" fill="#f68c8c"/><path d="M958.0 298.5h5M960.5 296.0v5" stroke="#000" stroke-width="1"/>
<circle cx="981.300" cy="284.500" r="13.500" fill="url(#fade)" filter="url(#n11)"/>
<path d="M995.0 296.0h2v5h-2zM992.0 299.0h3v2h-3z" fill="#f68c8c"/><path d="M992.0 298.5h5M994.5 296.0v5" stroke="#000" stroke-width="1"/>
<path d="M830 318C834 311 850 308 858 312V318z" fill="#000" filter="url(#n9)"/>
<path d="M866 318L869 310H890V318z" fill="#000" opacity="0.6" filter="url(#n10)"/>
<rect x="908" y="304" width="9" height="14" fill="#000" opacity="0.5" filter="url(#n3)"/>
<path d="M938 306L943 314M955 309L949 315M951 314H956M940 318L944 315" stroke="#aaa" stroke-width="1.400" fill="none"/>
<path d="M967 308C972 312 974 316 968 317C966 314 972 310 976 307M978 313C982 310 984 316 990 315H996" stroke="#aaa" stroke-width="1.100" fill="none"/>
</g></svg>
<div style="left:827px;top:318px;width:191px;height:29px;background:#353535"></div>
<div style="left:833px;top:323.500px;width:179px;height:19.500px;background:#202020"></div>
<div class="t" style="left:835px;top:325px;color:#e0e0e0"><b>Basic,</b></div>
<svg style="left:997px;top:328.500px" width="11" height="9" viewBox="0 0 11 9"><rect x="0" y="0" width="11" height="9" fill="#2a2a2a"/><path d="M1.300 2.300L5.500 6.300 9.700 2.300" fill="none" stroke="#f0f0f0" stroke-width="1.500"/></svg>
<div style="left:827px;top:347px;width:191px;height:19.500px;background:#383838;border:1px solid #7a7a7a"></div>
<div style="left:828px;top:348px;width:6.500px;height:17.500px;background:#585858;border-right:1px solid #0a0a0a"></div>
<div style="left:999px;top:349.500px;width:17px;height:15.500px;background:#484848"></div>
<div class="t" style="left:829.500px;top:349px;color:#c8c8c8">間隔</div>
<div class="t" style="left:940px;width:56px;text-align:right;top:349px;color:#d8d8d8"><b>10.0</b></div>
<svg style="left:1003px;top:349.500px" width="10" height="15" viewBox="0 0 10 15" fill="none" stroke="#ddd" stroke-width="1.500"><path d="M1.500 5.200L5 1.700 8.500 5.200"/><path d="M1.500 9.800L5 13.300 8.500 9.800"/></svg>
<!-- brush buttons -->
<svg style="left:821px;top:366px" width="203" height="34" viewBox="821 366 203 34">
<defs><pattern id="st" width="2" height="2" patternUnits="userSpaceOnUse"><rect x="0" y="0" width="1" height="1" fill="#d2d2d2"/><rect x="1" y="1" width="1" height="1" fill="#d2d2d2"/></pattern></defs>
<g fill="#c8c8c8">
<rect x="834" y="374.100" width="8" height="1.800"/><rect x="834" y="378" width="4" height="1.800"/><rect x="834" y="382" width="3" height="1.800"/><rect x="834" y="386" width="12.500" height="1.800"/>
<path d="M848.400 372.900L850.500 375 842.600 382.900 839.600 383.800 840.500 380.800z"/>
<path d="M872 375.400H875.500L878.100 378V386.400H868V380" fill="none" stroke="#c8c8c8" stroke-width="1.200"/>
<path d="M864.500 375.600h6.600M867.800 372.300v6.600" stroke="#c8c8c8" stroke-width="1.500"/>
<rect x="897.800" y="375" width="8.700" height="6.300" fill="none" stroke="#b4b4b4" stroke-width="1.200"/>
<rect x="901.700" y="378.700" width="8.700" height="6.300" fill="#3c3c3c" stroke="#b4b4b4" stroke-width="1.200"/>
<rect x="927.100" y="371.900" width="16" height="16" rx="1.500" fill="url(#st)"/>
<path d="M930.800 375.600L939.400 384.200M939.400 375.600L930.800 384.200" stroke="#3a3a3a" stroke-width="2.700"/>
<path d="M971 382A5.700 5.700 0 1 1 969.600 376.400" fill="none" stroke="#c8c8c8" stroke-width="2.300"/>
<path d="M968.300 373.300H973.300V378.800z"/>
<path d="M997 380V372.800H1003L1006.700 376.500V381" fill="none" stroke="#c8c8c8" stroke-width="1.200" stroke-dasharray="1.200 1"/>
<path d="M992.200 379C992.200 377 995.500 377 995.500 379V382.200H1007.900V387.700H992.200z" fill="url(#st)"/>
</g>
</svg>
<div class="dot" style="left:913px;top:396px;width:4px;height:2px"></div>
<div class="dot" style="left:920px;top:396px;width:4px;height:2px"></div>
<div class="dot" style="left:927px;top:396px;width:4px;height:2px"></div>
<div class="dot" style="left:819px;top:385px;width:2px;height:4px"></div>
<div class="dot" style="left:819px;top:392px;width:2px;height:4px"></div>
<div class="dot" style="left:819px;top:399px;width:2px;height:4px"></div>
<!-- layers dock -->
<div style="left:821px;top:422px;width:203px;height:305px;background:#3c3c3c;border:1px solid #5a5a5a"></div>
<div style="left:850.500px;top:402px;width:55.500px;height:20px;background:#272727"></div>
<div style="left:878px;top:402px;width:1px;height:20px;background:#3c3c3c"></div>
<div style="left:821px;top:399px;width:30px;height:24px;background:#3c3c3c;border:1px solid #5a5a5a;border-bottom:none"></div>
<svg style="left:821px;top:398px" width="203" height="26" viewBox="821 398 203 26" fill="#d4d4d4">
<path d="M832 403H844L840.500 406.500H828.500z"/><path d="M832 409H844L840.500 412.500H828.500z"/><path d="M832 415H844L840.500 418.500H828.500z"/>
<rect x="856.500" y="404.500" width="15.200" height="14.500" fill="none" stroke="#d4d4d4" stroke-width="1.100"/>
<path d="M860.200 406.800V416.700" stroke="#626262" stroke-width="2"/><path d="M864.400 406.800V416.700" stroke="#a0a0a0" stroke-width="2"/><path d="M868.500 406.800V416.700" stroke="#dcdcdc" stroke-width="2"/>
<path d="M885.300 418.200C885.300 410.300 898.800 410.300 898.800 418.200" fill="none" stroke="#d4d4d4" stroke-width="2"/>
<path d="M885 409.800H899" stroke="#d4d4d4" stroke-width="1.300"/>
<rect x="884" y="407.700" width="3.800" height="4.100"/><rect x="896.200" y="407.700" width="3.800" height="4.100"/>
<rect x="1008.500" y="406.500" width="9.200" height="9.200" fill="#555" stroke="#d0d0d0" stroke-width="1"/><path d="M1015.300 408.300V413.900L1010.600 411.100z" fill="#d0d0d0"/>
</svg>
<div class="combo" style="left:827px;top:425.500px;width:143px;height:29px"></div>
<div class="t" style="left:834px;top:432px;color:#606060">モード</div>
<div class="t" style="left:920.500px;top:432px;color:#606060">標準</div>
<svg style="left:950px;top:435px" width="15" height="9" viewBox="0 0 15 9"><path d="M1.500 1.500L7.300 7 13.100 1.500" fill="none" stroke="#e6e6e6" stroke-width="1.600"/></svg>
<div class="combo" style="left:971.500px;top:425.500px;width:46.500px;height:29px"></div>
<svg style="left:975px;top:432px" width="18" height="17" viewBox="975 432 18 17"><defs><pattern id="st2" width="2" height="2" patternUnits="userSpaceOnUse"><rect x="0" y="0" width="1" height="1" fill="#d2d2d2"/><rect x="1" y="1" width="1" height="1" fill="#d2d2d2"/></pattern><pattern id="st3" width="2" height="2" patternUnits="userSpaceOnUse"><rect x="0" y="0" width="1" height="1" fill="#787878"/><rect x="1" y="1" width="1" height="1" fill="#787878"/></pattern></defs>
<path d="M980.200 436.500A5.600 5.600 0 1 1 984.500 446.300" fill="none" stroke="url(#st2)" stroke-width="2.200"/>
<path d="M976 440L983 439.600 979.600 434.200z" fill="url(#st2)"/><circle cx="980" cy="445.800" r="2.500" fill="url(#st2)"/></svg>
<svg style="left:997.500px;top:435px" width="15" height="9" viewBox="0 0 15 9"><path d="M1.500 1.500L7.300 7 13.100 1.500" fill="none" stroke="#e6e6e6" stroke-width="1.600"/></svg>
<div style="left:828px;top:457px;width:189.500px;height:17.500px;background:#484848"></div>
<div style="left:828px;top:457px;width:169.500px;height:17.500px;background:#595959;border-right:1px solid #0a0a0a"></div>
<div class="t" style="left:829.500px;top:458px;color:#eaeaea">不透明度</div>
<div class="t" style="left:940px;width:56px;text-align:right;top:458px;color:#e0e0e0"><b>100.0</b></div>
<svg style="left:1003px;top:459px" width="10" height="15" viewBox="0 0 10 15" fill="none" stroke="#626262" stroke-width="1.500"><path d="M1.500 5.200L5 1.700 8.500 5.200"/><path d="M1.500 9.800L5 13.300 8.500 9.800"/></svg>
<div class="t" style="left:827px;top:482.500px;color:#8e8e8e">保護:</div>
<svg style="left:860px;top:480px" width="74" height="20" viewBox="860 480 74 20">
<path d="M877.500 482L870 495.500 866 493z" fill="url(#st2)"/><path d="M865.400 493.600L868.400 495.500C867.500 497.500 864.500 498.300 861.800 498.200C864 497 864.200 494.700 865.400 493.600z" fill="url(#st2)"/>
<path d="M896.200 481.800l3.600 3.900h-2.200v2.900h2.900v-2.200l3.900 3.600-3.900 3.600v-2.200h-2.900v2.900h2.200l-3.600 3.900-3.600-3.900h2.200v-2.900h-2.900v2.200l-3.900-3.600 3.900-3.600v2.200h2.900v-2.900h-2.200z" fill="url(#st2)"/>
<rect x="915" y="482" width="16.400" height="16" fill="url(#st3)"/>
<g fill="url(#st2)"><rect x="915" y="482" width="4.100" height="4"/><rect x="923.200" y="482" width="4.100" height="4"/><rect x="919.100" y="486" width="4.100" height="4"/><rect x="927.300" y="486" width="4.100" height="4"/><rect x="915" y="490" width="4.100" height="4"/><rect x="923.200" y="490" width="4.100" height="4"/><rect x="919.100" y="494" width="4.100" height="4"/><rect x="927.300" y="494" width="4.100" height="4"/></g>
</svg>
<div style="left:827.500px;top:503.500px;width:190px;height:195px;background:#303030;border-radius:2px"></div>
<div style="left:828.500px;top:504.500px;width:24.500px;height:24.500px;background:#484848"></div>
<div style="left:854.500px;top:504.500px;width:24.500px;height:24.500px;background:#484848"></div>
<div style="left:880.500px;top:504.500px;width:136.500px;height:24.500px;background:#484848"></div>
<svg style="left:828px;top:504px" width="52" height="26" viewBox="828 504 52 26">
<path d="M834 517C837 512 844.500 512 847.600 517C844.500 522 837 522 834 517z" fill="none" stroke="#d0d0d0" stroke-width="1.600"/><circle cx="840.800" cy="516.600" r="2.500" fill="#d0d0d0"/>
<rect x="863.900" y="510" width="5.800" height="6" rx="1" fill="none" stroke="#d0d0d0" stroke-width="2"/>
<path d="M863.800 524.500V520.500C863.800 519 865 518.200 866.800 518.200C868.600 518.200 869.800 519 869.800 520.500V524.500" fill="none" stroke="#d0d0d0" stroke-width="2"/>
<path d="M866.800 515.500V519" stroke="#d0d0d0" stroke-width="1.400"/>
</svg>
<!-- layer buttons -->
<svg style="left:821px;top:700px" width="203" height="28" viewBox="821 700 203 28">
<g fill="none" stroke="#c8c8c8" stroke-width="1" stroke-dasharray="1 1">
<path d="M836.500 705.500H840.500L843.600 708.600V719.500H832.600V710"/>
<path d="M924 706.800H933V710" stroke-width="1.400"/><path d="M927.800 710.400H936.800V717.200H927.800z" stroke-width="1.400"/><path d="M924 712.600H927.500" stroke-width="1.400"/>
</g>
<path d="M832 708.500L834.500 705L837 708.500" fill="none" stroke="#c8c8c8" stroke-width="1.200"/>
<path d="M854.900 704.500H860L861.500 706.500H868V720H854.900z" fill="url(#st2)"/>
<path d="M857.800 714.300H865.400M861.600 710.500V718.100" stroke="#2e2e2e" stroke-width="1.800"/>
<path d="M878.300 714.800L884.200 708.600 890.100 714.800" fill="none" stroke="url(#st2)" stroke-width="2.600"/>
<path d="M901.600 709.100L907.500 715.300 913.400 709.100" fill="none" stroke="url(#st2)" stroke-width="2.600"/>
<g fill="url(#st2)"><rect x="947" y="707.100" width="5.800" height="2.500" rx="1"/><rect x="947" y="711" width="5.800" height="2.500" rx="1"/><rect x="947" y="714.900" width="5.800" height="2.500" rx="1"/></g>
<path d="M958 707.300V715.500" fill="none" stroke="url(#st2)" stroke-width="2"/><path d="M954.800 713.300H961.200L958 717.800z" fill="url(#st2)"/>
<path d="M970 704H979V708.500C979 711 976.500 712.500 974.500 712.500C972.500 712.500 970 711 970 708.500z" fill="url(#st2)"/><path d="M971.600 706.300h1.800M975.600 706.300h1.800M972.300 709.300C973.500 710.500 975.500 710.500 976.700 709.300" stroke="#3a3a3a" stroke-width="1" fill="none"/>
<path d="M970 714L975 715 983 711.700V714L978 718H970z" fill="url(#st2)"/>
<rect x="994.900" y="703.800" width="16.200" height="16" rx="1.500" fill="url(#st2)"/>
<path d="M998.600 707.500L1007.400 716.300M1007.400 707.500L998.600 716.300" stroke="#3a3a3a" stroke-width="2.700"/>
</svg>
</div>
</body>
</html>
